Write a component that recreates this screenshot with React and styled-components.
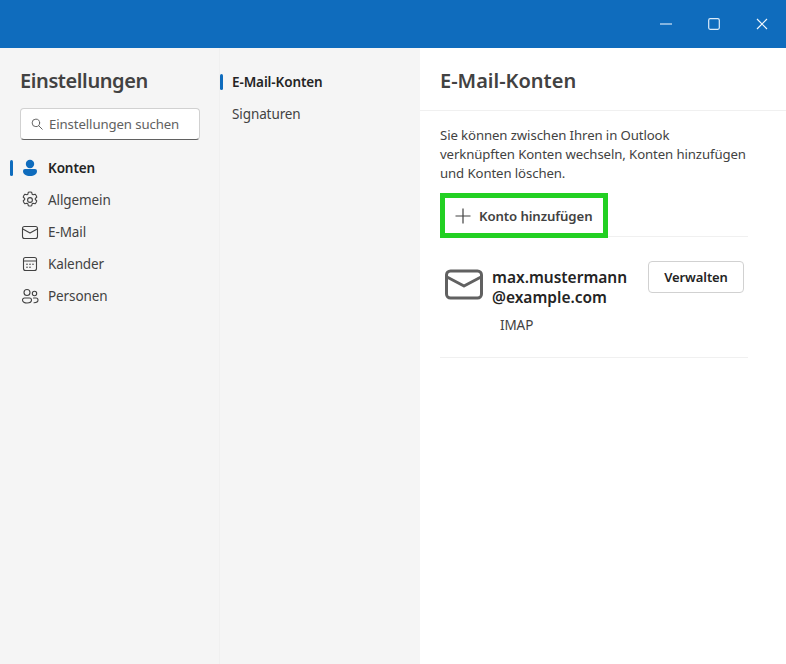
import React from "react";
import styled, { createGlobalStyle } from "styled-components";

const Global = createGlobalStyle`
  html, body { margin: 0; padding: 0; background: #fff; }
  body { font-family: "Noto Sans", "Open Sans", "Liberation Sans", sans-serif; color: #424242; }
  #root { width: 786px; height: 664px; overflow: hidden; }
`;

const Window = styled.div`
  width: 786px; height: 664px; display: flex; flex-direction: column;
`;
const TitleBar = styled.header`
  height: 48px; flex: none; background: #0f6cbd; display: flex; justify-content: flex-end;
`;
const WinButton = styled.div`
  width: 48px; height: 48px; display: flex; align-items: center; justify-content: center;
`;
const Body = styled.div`
  flex: 1; display: flex; min-height: 0;
`;
const NavPane = styled.nav`
  width: 219px; flex: none; background: #f5f5f5; border-right: 1px solid #f0f0f0;
  padding: 19px 0 0; box-sizing: content-box;
`;
const NavTitle = styled.h1`
  margin: 0 0 14px 20px; font-size: 20px; line-height: 27px; font-weight: 600; color: #424242; letter-spacing: -0.4px;
`;
const SearchBox = styled.div`
  margin-left: 20px; width: 180px; height: 32px; box-sizing: border-box; background: #fff;
  border: 1px solid #d1d1d1; border-bottom-color: #616161; border-radius: 4px;
  display: flex; align-items: center; gap: 6px; padding-left: 10px;
  font-size: 13.2px; color: #616161; letter-spacing: -0.1px;
`;
const NavList = styled.div`
  margin-top: 12px; display: flex; flex-direction: column;
`;
const NavItem = styled.div`
  height: 32px; display: flex; align-items: center; position: relative; padding-left: 20px; gap: 8px;
  font-size: 13.5px; letter-spacing: -0.1px;
  font-weight: ${(p) => (p.$active ? 600 : 400)};
  color: ${(p) => (p.$active ? "#242424" : "#424242")};
`;
const ActiveBar = styled.span`
  position: absolute; left: ${(p) => p.$left}px; top: 8px; width: 3px; height: 16px; border-radius: 2px; background: #0f6cbd;
`;
const SubPane = styled.div`
  width: 200px; flex: none; background: #f5f5f5; padding-top: 18px; box-sizing: border-box;
  display: flex; flex-direction: column;
`;
const SubItem = styled.div`
  height: 32px; display: flex; align-items: center; position: relative; padding-left: 12px;
  font-size: 13.5px; letter-spacing: -0.1px;
  font-weight: ${(p) => (p.$active ? 600 : 400)};
  color: ${(p) => (p.$active ? "#242424" : "#424242")};
`;
const Content = styled.main`
  flex: 1; min-width: 0; background: #fff;
`;
const ContentHeader = styled.div`
  height: 63px; box-sizing: border-box; border-bottom: 1px solid #f0f0f0; padding: 19px 20px 0;
  font-size: 20px; line-height: 27px; font-weight: 600; color: #424242; letter-spacing: 0;
`;
const ContentBody = styled.div`
  padding: 15px 38px 0 20px;
`;
const Intro = styled.p`
  margin: 0 0 10px; font-size: 13.2px; line-height: 19px; color: #424242; letter-spacing: -0.1px; white-space: nowrap;
`;
const AddRow = styled.div`
  border-bottom: 1px solid #f0f0f0; height: 44px; box-sizing: border-box;
`;
const AddButton = styled.div`
  width: 168px; height: 45px; box-sizing: border-box; border: 5px solid #22d022;
  display: flex; align-items: center; padding-left: 9px; gap: 7px;
  font-size: 13.2px; font-weight: 600; color: #424242; letter-spacing: -0.1px;
`;
const AccountRow = styled.div`
  height: 121px; box-sizing: border-box; border-bottom: 1px solid #f0f0f0; padding: 24px 4px 0 4px;
  display: flex; align-items: flex-start;
`;
const MailBox = styled.div`
  width: 40px; flex: none; margin-top: 8px; margin-right: 8px; height: 32px;
`;
const AccountInfo = styled.div`
  flex: 1; min-width: 0; padding-top: 6px;
`;
const AccountName = styled.div`
  font-size: 15.5px; line-height: 20px; font-weight: 600; color: #242424;
`;
const AccountType = styled.div`
  margin: 8px 0 0 8px; font-size: 13.5px; line-height: 20px; color: #424242; letter-spacing: -0.1px;
`;
const ManageButton = styled.button`
  width: 96px; height: 32px; box-sizing: border-box; background: #fff; border: 1px solid #d1d1d1; border-radius: 4px;
  font: 600 13px "Noto Sans", "Open Sans", sans-serif; color: #242424; padding: 0; letter-spacing: -0.1px;
`;

const IconBase = styled.svg`
  flex: none; display: block;
`;
const Ico = ({ size = 20, children, ...r }) => (
  <IconBase width={size} height={size} viewBox="0 0 20 20" fill="none" stroke="#424242" strokeWidth="1.1" strokeLinecap="round" strokeLinejoin="round" {...r}>
    {children}
  </IconBase>
);

export default function App() {
  return (
    <Window>
      <Global />
      <TitleBar>
        <WinButton>
          <svg width="12" height="12" viewBox="0 0 12 12"><path d="M0 6h12" stroke="#c4dcf2" strokeWidth="1.3" /></svg>
        </WinButton>
        <WinButton>
          <svg width="12" height="12" viewBox="0 0 12 12"><rect x="0.7" y="0.7" width="10.6" height="10.6" rx="1.5" fill="none" stroke="#dcecfa" strokeWidth="1.2" /></svg>
        </WinButton>
        <WinButton>
          <svg width="12" height="12" viewBox="0 0 12 12"><path d="M1 1l10 10M11 1L1 11" stroke="#f0f7fd" strokeWidth="1.2" /></svg>
        </WinButton>
      </TitleBar>
      <Body>
        <NavPane>
          <NavTitle>Einstellungen</NavTitle>
          <SearchBox>
            <Ico size={12} viewBox="0 0 16 16" stroke="#616161" strokeWidth="1.3">
              <circle cx="6.5" cy="6.5" r="5" />
              <path d="M10.2 10.2L15 15" />
            </Ico>
            Einstellungen suchen
          </SearchBox>
          <NavList>
            <NavItem $active>
              <ActiveBar $left={10} />
              <Ico>
                <circle cx="10" cy="6" r="4.2" fill="#0f6cbd" stroke="none" />
                <path d="M3 13a2 2 0 0 1 2-2h10a2 2 0 0 1 2 2c0 3.2-3 5-7 5s-7-1.8-7-5z" fill="#0f6cbd" stroke="none" />
              </Ico>
              Konten
            </NavItem>
            <NavItem>
              <Ico>
                <circle cx="10" cy="10" r="2.4" />
                <path d="M8.3 2.3c1.1-.3 2.3-.3 3.4 0l.5 2 .9.5 2-.6c.8.8 1.4 1.8 1.7 2.9l-1.5 1.4v1l1.5 1.4c-.3 1.1-.9 2.1-1.7 2.9l-2-.6-.9.5-.5 2c-1.1.3-2.3.3-3.4 0l-.5-2-.9-.5-2 .6c-.8-.8-1.4-1.8-1.7-2.9l1.500-1.400v-1L3.200 7.100c.3-1.100.9-2.100 1.700-2.900l2 .6.9-.5z" />
              </Ico>
              Allgemein
            </NavItem>
            <NavItem>
              <Ico>
                <rect x="2.500" y="4.500" width="15" height="12" rx="2" />
                <path d="M2.800 7L10 11l7.200-4" />
              </Ico>
              E-Mail
            </NavItem>
            <NavItem>
              <Ico>
                <rect x="3.500" y="3.500" width="13" height="13" rx="2" />
                <path d="M3.500 7h13" />
                <path d="M7 10.200h.01M10 10.200h.01M13 10.200h.01M7 13.200h.01M10 13.200h.01" strokeWidth="1.600" />
              </Ico>
              Kalender
            </NavItem>
            <NavItem>
              <Ico>
                <circle cx="7" cy="6.500" r="3" />
                <circle cx="14.500" cy="7.500" r="2.200" />
                <path d="M2.500 14a2 2 0 0 1 2-2h5a2 2 0 0 1 2 2c0 1.800-2 3-4.500 3s-4.500-1.200-4.500-3z" />
                <path d="M13.500 12h2.500a2 2 0 0 1 2 2c0 1.600-1.500 2.700-4 2.700" />
              </Ico>
              Personen
            </NavItem>
          </NavList>
        </NavPane>
        <SubPane>
          <SubItem $active>
            <ActiveBar $left={0} />
            E-Mail-Konten
          </SubItem>
          <SubItem>Signaturen</SubItem>
        </SubPane>
        <Content>
          <ContentHeader>E-Mail-Konten</ContentHeader>
          <ContentBody>
            <Intro>
              Sie können zwischen Ihren in Outlook
              <br />
              verknüpften Konten wechseln, Konten hinzufügen
              <br />
              und Konten löschen.
            </Intro>
            <AddRow>
              <AddButton>
                <Ico size={18} viewBox="0 0 18 18" strokeWidth="1.200" strokeLinecap="butt">
                  <path d="M9 1.500v15M1.500 9h15" />
                </Ico>
                Konto hinzufügen
              </AddButton>
            </AddRow>
            <AccountRow>
              <MailBox>
                <svg width="40" height="32" viewBox="0 0 40 32" fill="none" stroke="#616161" strokeWidth="3" strokeLinejoin="round">
                  <rect x="2.500" y="2" width="35" height="27" rx="4" />
                  <path d="M3 8l17 9 17-9" />
                </svg>
              </MailBox>
              <AccountInfo>
                <AccountName>max.mustermann<br />@example.com</AccountName>
                <AccountType>IMAP</AccountType>
              </AccountInfo>
              <ManageButton>Verwalten</ManageButton>
            </AccountRow>
          </ContentBody>
        </Content>
      </Body>
    </Window>
  );
}
